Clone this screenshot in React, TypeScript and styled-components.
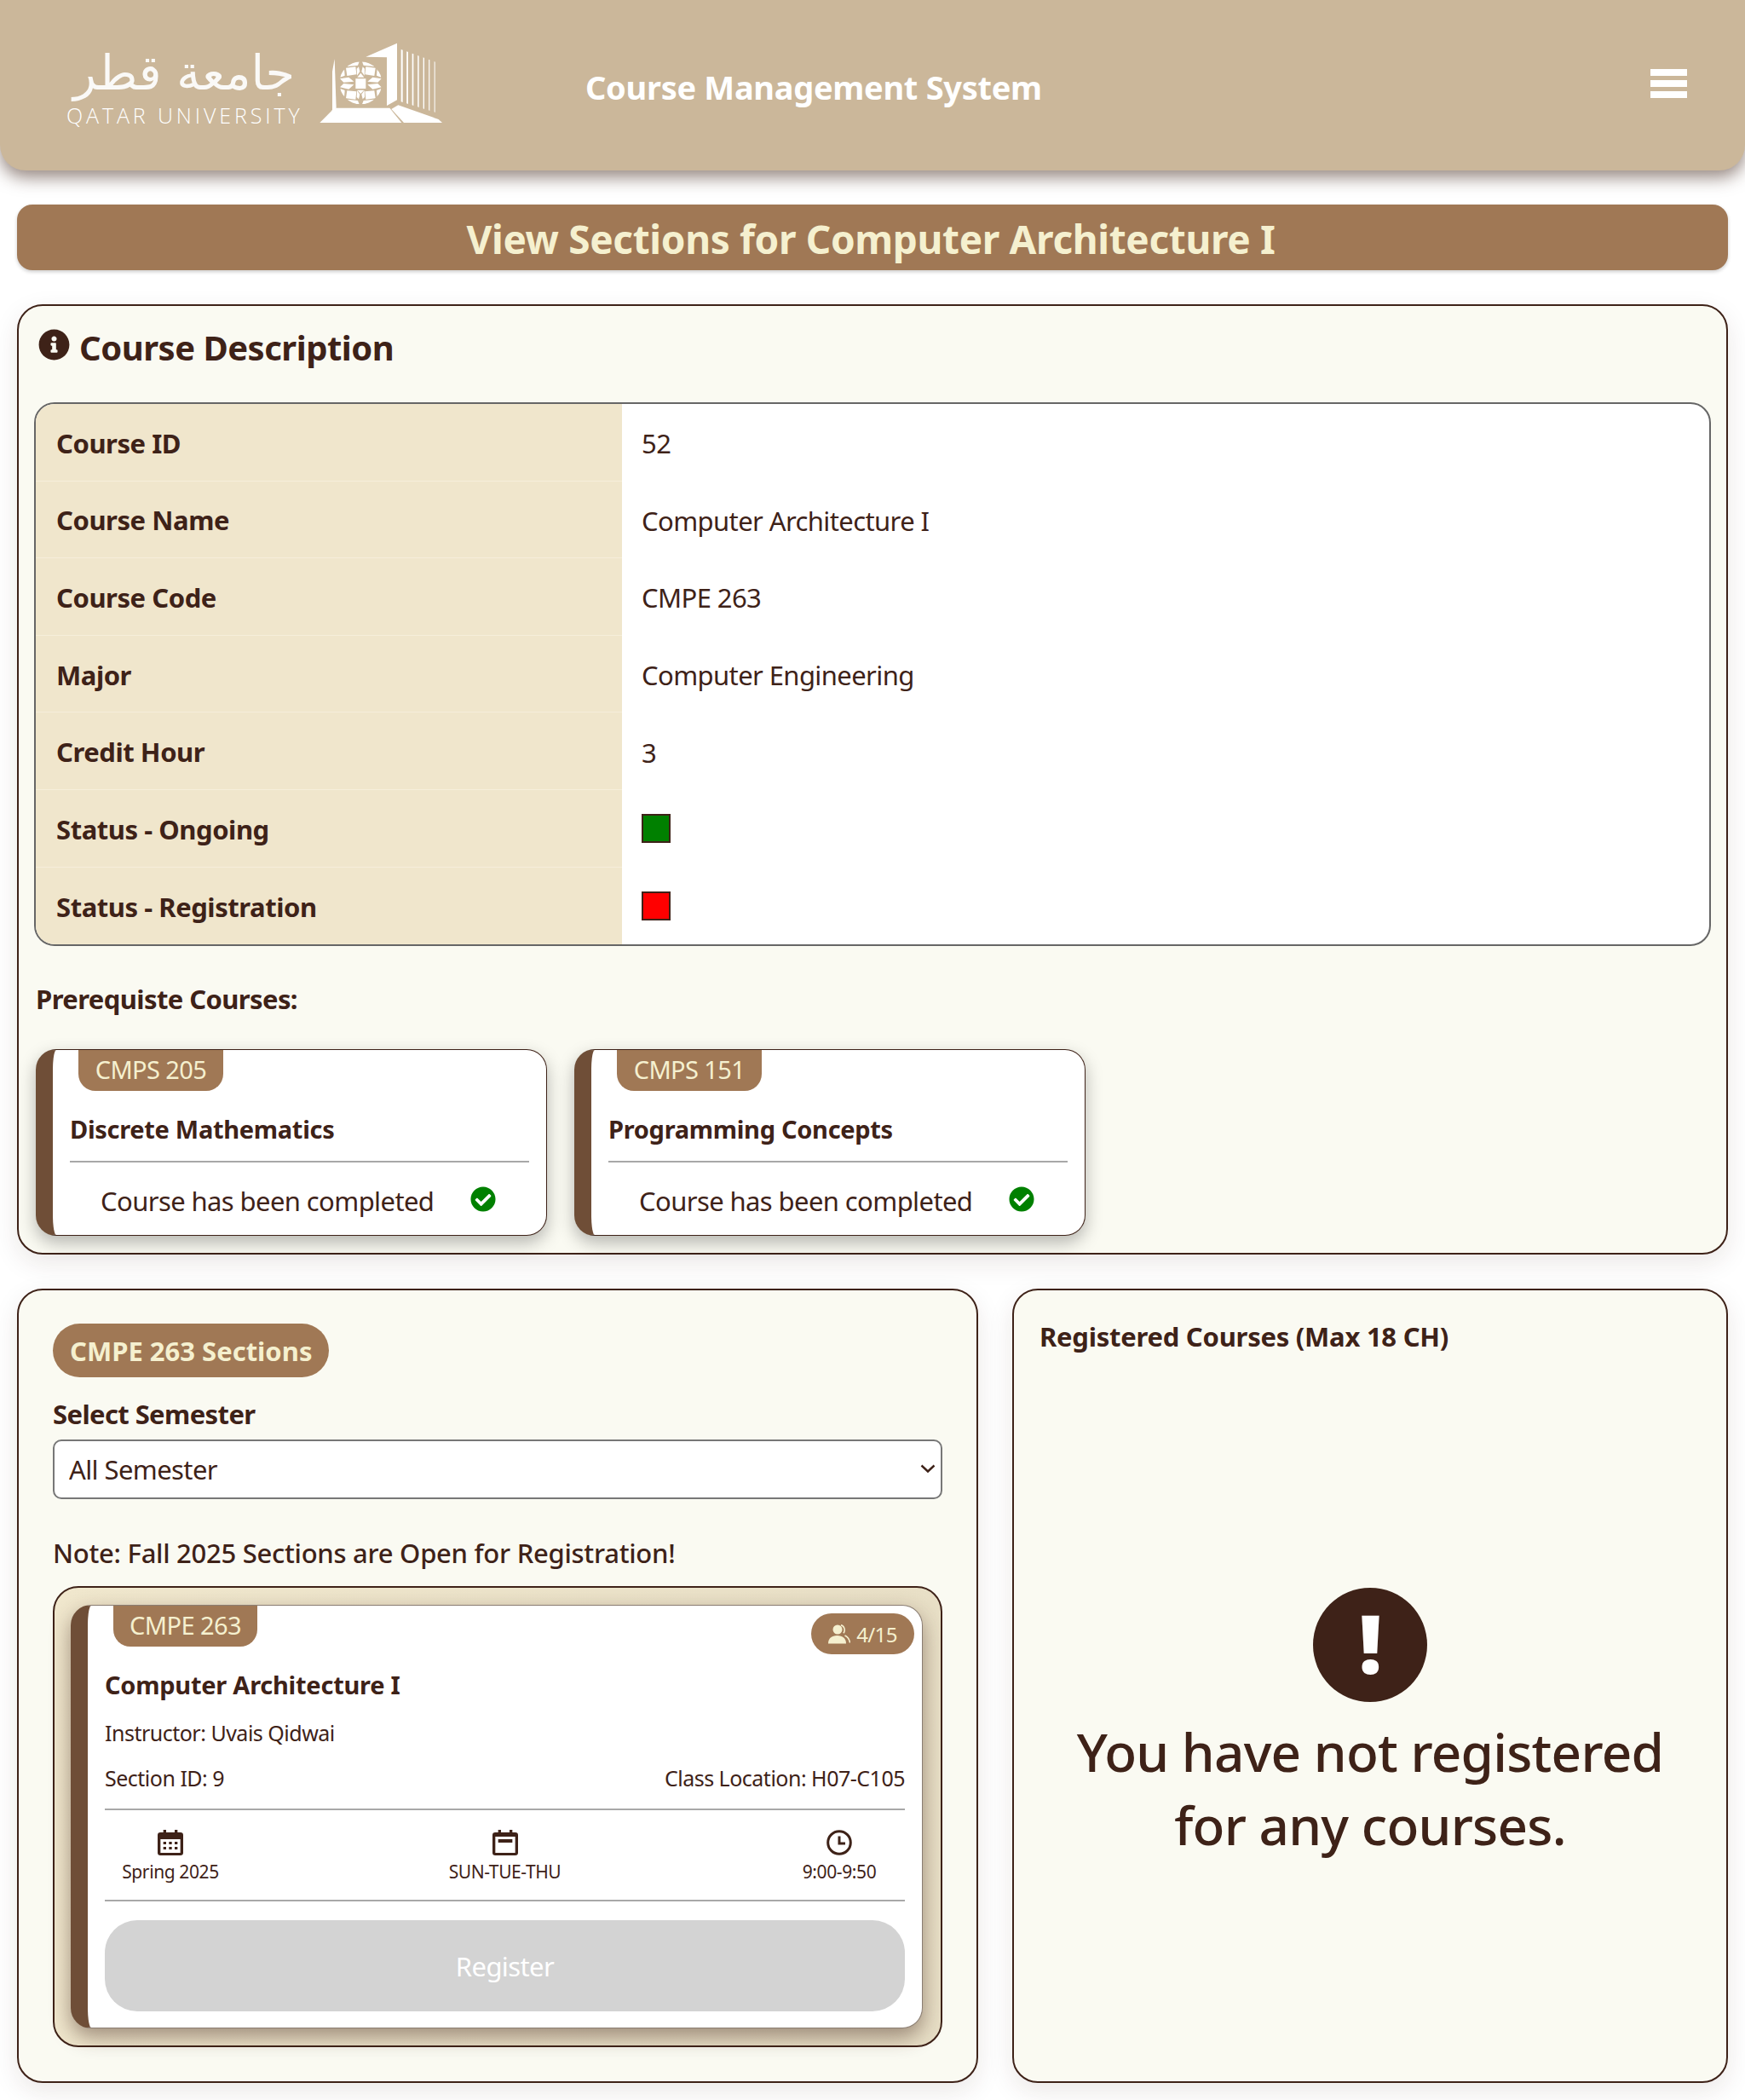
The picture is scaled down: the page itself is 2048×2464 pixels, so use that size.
import React from "react";
import styled, { createGlobalStyle } from "styled-components";
import { FaCheckCircle, FaInfoCircle } from "react-icons/fa";

const dark = "#3e2218";
const tan = "#a07855";
const cream = "#f5f0cf";
const font = `"Noto Sans", "Open Sans", sans-serif`;

const Global = createGlobalStyle`
  html, body { margin: 0; padding: 0; background: #fff; }
  body { font-family: ${font}; color: ${dark}; font-size: 31px; letter-spacing: -0.6px; }
  * { box-sizing: border-box; }
`;

const Page = styled.div`
  width: 2048px;
  height: 2464px;
  overflow: hidden;
`;
const Header = styled.header`
  height: 200px;
  background: #cbb79a;
  border-radius: 0 0 30px 30px;
  box-shadow: 0 8px 20px rgba(62, 34, 24, 0.55);
  display: flex;
  align-items: flex-start;
  padding-left: 78px;
  position: relative;
`;
const Wordmark = styled.div`
  width: 276px;
  height: 200px;
  padding-top: 53px;
  color: #fff;
  display: flex;
  flex-direction: column;
  align-items: stretch;
`;
const Arabic = styled.div`
  font-family: "DejaVu Sans", sans-serif;
  font-size: 56px;
  font-weight: 400;
  letter-spacing: 0;
  line-height: 65px;
  height: 65px;
  text-align: center;
  white-space: nowrap;
  direction: rtl;
  opacity: 0.92;
`;
const Latin = styled.div`
  font-family: "Open Sans", sans-serif;
  font-size: 25px;
  font-weight: 300;
  letter-spacing: 3.9px;
  line-height: 34px;
  white-space: nowrap;
`;
const Emblem = styled.svg`
  width: 156px;
  height: 108px;
  margin: 44px 0 0 16px;
  flex: none;
`;
const AppTitle = styled.h1`
  margin: 77px 0 0 161px;
  font-size: 38px;
  line-height: 50px;
  font-weight: 700;
  letter-spacing: -0.3px;
  color: #fff;
  white-space: nowrap;
`;
const MenuButton = styled.div`
  margin: 81px 0 0 auto;
  margin-right: 68px;
  width: 43px;
  display: flex;
  flex-direction: column;
  gap: 5px;
`;
const MenuBar = styled.span`
  display: block;
  height: 8px;
  background: #fff;
`;
const Main = styled.main`
  padding: 40px 20px 0;
  display: flex;
  flex-direction: column;
  gap: 40px;
`;
const Banner = styled.h2`
  margin: 0;
  height: 77px;
  background: ${tan};
  border-radius: 18px;
  color: ${cream};
  font-size: 46px;
  line-height: 80px;
  font-weight: 700;
  letter-spacing: -0.35px;
  text-align: center;
  padding-right: 4px;
  box-shadow: 0 2px 4px rgba(0, 0, 0, 0.2);
  overflow: hidden;
`;
const Panel = styled.section`
  background: #fafaf2;
  border: 2px solid ${dark};
  border-radius: 30px;
  box-shadow: 0 10px 30px rgba(62, 34, 24, 0.1);
`;
const DescPanel = styled(Panel)`
  height: 1115px;
  padding: 0 18px;
`;
const DescHeading = styled.h3`
  margin: 0;
  height: 113px;
  display: flex;
  align-items: center;
  gap: 11px;
  padding: 0 0 16px 5px;
  font-size: 40px;
  font-weight: 700;
  letter-spacing: -0.5px;
  svg { width: 37px; height: 37px; margin-top: -6px; }
`;
const InfoTable = styled.div`
  border: 2px solid #666;
  border-radius: 24px;
  overflow: hidden;
  background: #fff;
`;
const Row = styled.div`
  display: grid;
  grid-template-columns: 688px 1fr;
  height: 90.6px;
`;
const RowLabel = styled.div`
  background: #f0e6cc;
  font-weight: 700;
  letter-spacing: -0.45px;
  display: flex;
  align-items: center;
  padding: 2px 0 0 24px;
  border-bottom: 1px solid #f6eedb;
  ${Row}:last-child & { border-bottom: 0; }
`;
const RowValue = styled.div`
  display: flex;
  align-items: center;
  padding: 2px 0 0 23px;
`;
const Swatch = styled.span<{ $color: string }>`
  display: block;
  width: 34px;
  height: 34px;
  background: ${(p) => p.$color};
  border: 2px solid ${dark};
  margin-top: -2px;
`;
const PrereqTitle = styled.div`
  font-weight: 700;
  line-height: 40px;
  margin: 42px 0 39px 2px;
`;
const PrereqList = styled.div`
  display: flex;
  gap: 32px;
  padding-left: 2px;
`;
const CourseCard = styled.article`
  width: 600px;
  height: 219px;
  background: #fff;
  border: 1px solid ${dark};
  border-left: 20px solid #6f4e37;
  border-radius: 24px;
  box-shadow: 0 8px 20px rgba(0, 0, 0, 0.28);
  padding: 0 20px;
  display: flex;
  flex-direction: column;
`;
const Tab = styled.div<{ $w: number }>`
  width: ${(p) => p.$w}px;
  height: 48px;
  flex: none;
  margin-left: 10px;
  background: ${tan};
  color: ${cream};
  border-radius: 0 0 20px 20px;
  font-size: 29px;
  line-height: 46px;
  text-align: center;
`;
const CourseName = styled.div`
  font-weight: 700;
  font-size: 29px;
  letter-spacing: -0.3px;
  line-height: 40px;
  margin-top: 25px;
`;
const Rule = styled.hr`
  border: 0;
  height: 2px;
  background: #a8a8a8;
  margin: 17px 0 0;
  flex: none;
`;
const Done = styled.div`
  display: flex;
  align-items: center;
  justify-content: space-between;
  height: 40px;
  width: 464px;
  margin: 25px 0 0 36px;
  white-space: nowrap;
  svg { width: 30px; height: 30px; color: #008000; margin-top: -4px; flex: none; }
`;
const Lower = styled.div`
  display: grid;
  grid-template-columns: 1128px 840px;
  gap: 40px;
  height: 932px;
`;
const SectionsPanel = styled(Panel)`
  padding: 39px 40px 0;
`;
const Pill = styled.div`
  display: inline-block;
  height: 63px;
  padding: 1px 20px 0;
  background: ${tan};
  color: ${cream};
  border-radius: 32px;
  font-weight: 700;
  letter-spacing: 0;
  line-height: 63px;
`;
const FieldLabel = styled.label`
  display: block;
  font-weight: 700;
  line-height: 40px;
  margin-top: 23px;
`;
const SelectWrap = styled.div`
  position: relative;
  margin-top: 10px;
  svg { position: absolute; right: 8px; top: 28px; pointer-events: none; }
`;
const Select = styled.select`
  display: block;
  width: 100%;
  height: 70px;
  appearance: none;
  font: 400 31px ${font};
  letter-spacing: -0.6px;
  color: ${dark};
  background: #fff;
  border: 2px solid #777;
  border-radius: 10px;
  padding: 0 17px;
`;
const Note = styled.div`
  font-weight: 500;
  letter-spacing: -0.27px;
  line-height: 40px;
  margin-top: 43px;
`;
const SectionTray = styled.div`
  height: 541px;
  margin-top: 19px;
  border: 2px solid ${dark};
  border-radius: 30px;
  background: linear-gradient(90deg, #f0e7cd, #e8dfc6);
  padding: 20px 21px 20px 19px;
`;
const SectionCard = styled.article`
  height: 497px;
  background: #fff;
  border: 1px solid #8a7d72;
  border-left: 20px solid #6f4e37;
  border-radius: 24px;
  box-shadow: 0 10px 24px rgba(62, 34, 24, 0.45);
  padding: 0 20px;
  display: flex;
  flex-direction: column;
  position: relative;
`;
const Capacity = styled.div`
  position: absolute;
  top: 9px;
  right: 9px;
  width: 121px;
  height: 48px;
  border-radius: 24px;
  background: ${tan};
  color: ${cream};
  font-size: 24px;
  display: flex;
  align-items: center;
  justify-content: center;
  gap: 7px;
`;
const SectionName = styled.div`
  font-weight: 700;
  font-size: 29px;
  letter-spacing: -0.25px;
  line-height: 40px;
  margin-top: 25px;
`;
const SmallLine = styled.div`
  display: flex;
  justify-content: space-between;
  font-size: 25px;
  letter-spacing: -0.5px;
  line-height: 34px;
  margin-top: 19px;
`;
const SectionRule = styled(Rule)`
  margin: 19px 0 0;
`;
const Facts = styled.div`
  display: flex;
  justify-content: space-between;
  height: 105px;
  padding-top: 23px;
`;
const Fact = styled.div`
  width: 154px;
  display: flex;
  flex-direction: column;
  align-items: center;
  font-size: 21px;
  letter-spacing: -0.4px;
  line-height: 30px;
  white-space: nowrap;
  svg { width: 30px; height: 30px; display: block; margin-bottom: 4px; }
`;
const FactRule = styled(Rule)`
  margin: 0;
`;
const RegisterButton = styled.button`
  display: block;
  width: 100%;
  height: 107px;
  margin-top: 22px;
  border: 0;
  border-radius: 38px;
  background: #d3d3d3;
  color: #fff;
  font: 400 31px ${font};
  letter-spacing: -0.6px;
`;
const RegisteredPanel = styled(Panel)`
  padding: 34px 30px 0;
  display: flex;
  flex-direction: column;
  align-items: stretch;
`;
const RegisteredTitle = styled.div`
  font-weight: 700;
  letter-spacing: -0.25px;
  line-height: 40px;
`;
const Empty = styled.div`
  margin-top: 275px;
  display: flex;
  flex-direction: column;
  align-items: center;
`;
const Alert = styled.div`
  width: 134px;
  height: 134px;
  border-radius: 50%;
  background: ${dark};
  color: #fff;
  font-size: 96px;
  font-weight: 900;
  line-height: 128px;
  text-align: center;
`;
const EmptyText = styled.div`
  margin-top: 15px;
  font-size: 62px;
  letter-spacing: -0.75px;
  line-height: 86px;
  text-align: center;
  width: 720px;
  font-weight: 500;
`;

const Bars = [0, 1, 2, 3, 4, 5, 6];

const QuLogo = () => (
  <Emblem viewBox="0 0 468 324" aria-hidden="true">
    <defs>
      <clipPath id="globe">
        <circle cx="160" cy="160" r="75" />
      </clipPath>
    </defs>
    <g fill="#fff">
      <polygon points="68,75 60,120 60,262 74,248" />
      <polygon points="16,300 60,256 74,248 262,248 304,300" />
      <polygon points="178,68 288,20 288,220 252,240 252,70" />
      <polygon points="268,252 292,238 434,288 447,300 312,300" />
      {Bars.map((i) => (
        <polygon
          key={i}
          points={`${302 + i * 19.5},${42 + i * 7} ${308 + i * 19},${44 + i * 7} ${308 + i * 19},${228 + i * 6} ${302 + i * 19.5},${226 + i * 6}`}
        />
      ))}
      <g clipPath="url(#globe)">
        <polygon points="142,145 178,145 178,180 142,180" />
        <polygon points="160,125 148,140 172,140" />
        <polygon points="160,198 148,185 172,185" />
        {[0, 1].map((flip) => (
          <g key={flip} transform={flip ? "translate(320 0) scale(-1 1)" : undefined}>
            <polygon points="108,107 142,103 145,130 112,135" />
            <polygon points="112,187 145,190 142,218 108,214" />
            <polygon points="87,145 118,140 136,155 100,158" />
            <polygon points="87,175 100,162 136,166 118,182" />
            <polygon points="118,88 155,85 150,98 112,102" />
            <polygon points="153,103 157,120 147,134 146,110" />
            <polygon points="118,232 155,235 150,222 112,218" />
            <polygon points="153,217 157,200 147,186 146,210" />
            <polygon points="86,132 102,110 104,134 88,140" />
            <polygon points="86,188 102,210 104,186 88,180" />
          </g>
        ))}
      </g>
    </g>
  </Emblem>
);

const MonthIcon = () => (
  <svg viewBox="0 0 27 30" fill={dark} aria-hidden="true" preserveAspectRatio="none">
    <rect x="6" y="0" width="3" height="5" />
    <rect x="18" y="0" width="3" height="5" />
    <path d="M3 3h21a3 3 0 0 1 3 3v21a3 3 0 0 1-3 3H3a3 3 0 0 1-3-3V6a3 3 0 0 1 3-3zm0 8v16h21V11z" fillRule="evenodd" />
    {[6, 12, 18].map((x) =>
      [14, 20].map((y) => <rect key={`${x}-${y}`} x={x} y={y} width="3" height="3" />)
    )}
  </svg>
);
const DayIcon = () => (
  <svg viewBox="0 0 27 30" fill={dark} aria-hidden="true" preserveAspectRatio="none">
    <rect x="6" y="0" width="3" height="5" />
    <rect x="18" y="0" width="3" height="5" />
    <path d="M3 3h21a3 3 0 0 1 3 3v21a3 3 0 0 1-3 3H3a3 3 0 0 1-3-3V6a3 3 0 0 1 3-3zm0 5v19h21V8z" fillRule="evenodd" />
    <rect x="6" y="11" width="15" height="4" />
  </svg>
);
const ClockIcon = () => (
  <svg viewBox="0 0 30 30" fill="none" stroke={dark} aria-hidden="true">
    <circle cx="15" cy="15" r="13.3" strokeWidth="3" />
    <path d="M15 7.5V16h7" strokeWidth="3" />
  </svg>
);
const PeopleIcon = () => (
  <svg width="26" height="23" viewBox="0 0 26 23" aria-hidden="true">
    <circle cx="11" cy="6" r="5.5" fill={cream} />
    <path d="M0 22.5c0-6 4-9.5 10.5-9.5S21 16.500 21 22.500z" fill={cream} />
    <path d="M15 .8c4 1 5.500 6 3 9.500M19.500 13c3.500 1.500 5.500 5 6 8.500" fill="none" stroke={cream} strokeWidth="1.600" />
  </svg>
);
const Chevron = () => (
  <svg width="18" height="12" viewBox="0 0 18 12" fill="none" stroke={dark} strokeWidth="2.400" aria-hidden="true">
    <path d="M1.500 2.500l7.500 7 7.500-7" />
  </svg>
);

const details: [string, React.ReactNode][] = [
  ["Course ID", "52"],
  ["Course Name", "Computer Architecture I"],
  ["Course Code", "CMPE 263"],
  ["Major", "Computer Engineering"],
  ["Credit Hour", "3"],
  ["Status - Ongoing", <Swatch $color="#008000" />],
  ["Status - Registration", <Swatch $color="#ff0000" />],
];

const prereqs = [
  { code: "CMPS 205", name: "Discrete Mathematics" },
  { code: "CMPS 151", name: "Programming Concepts" },
];

export default function App() {
  return (
    <Page>
      <Global />
      <Header>
        <Wordmark>
          <Arabic>جامعة قطر</Arabic>
          <Latin>QATAR UNIVERSITY</Latin>
        </Wordmark>
        <QuLogo />
        <AppTitle>Course Management System</AppTitle>
        <MenuButton>
          <MenuBar />
          <MenuBar />
          <MenuBar />
        </MenuButton>
      </Header>
      <Main>
        <Banner>View Sections for Computer Architecture I</Banner>
        <DescPanel>
          <DescHeading>
            <FaInfoCircle />
            Course Description
          </DescHeading>
          <InfoTable>
            {details.map(([label, value]) => (
              <Row key={label}>
                <RowLabel>{label}</RowLabel>
                <RowValue>{value}</RowValue>
              </Row>
            ))}
          </InfoTable>
          <PrereqTitle>Prerequiste Courses:</PrereqTitle>
          <PrereqList>
            {prereqs.map((p) => (
              <CourseCard key={p.code}>
                <Tab $w={170}>{p.code}</Tab>
                <CourseName>{p.name}</CourseName>
                <Rule />
                <Done>
                  Course has been completed
                  <FaCheckCircle />
                </Done>
              </CourseCard>
            ))}
          </PrereqList>
        </DescPanel>
        <Lower>
          <SectionsPanel>
            <Pill>CMPE 263 Sections</Pill>
            <FieldLabel htmlFor="semester">Select Semester</FieldLabel>
            <SelectWrap>
              <Select id="semester" defaultValue="all">
                <option value="all">All Semester</option>
              </Select>
              <Chevron />
            </SelectWrap>
            <Note>Note: Fall 2025 Sections are Open for Registration!</Note>
            <SectionTray>
              <SectionCard>
                <Tab $w={169}>CMPE 263</Tab>
                <Capacity>
                  <PeopleIcon />
                  4/15
                </Capacity>
                <SectionName>Computer Architecture I</SectionName>
                <SmallLine>Instructor: Uvais Qidwai</SmallLine>
                <SmallLine>
                  <span>Section ID: 9</span>
                  <span>Class Location: H07-C105</span>
                </SmallLine>
                <SectionRule />
                <Facts>
                  <Fact>
                    <MonthIcon />
                    Spring 2025
                  </Fact>
                  <Fact>
                    <DayIcon />
                    SUN-TUE-THU
                  </Fact>
                  <Fact>
                    <ClockIcon />
                    9:00-9:50
                  </Fact>
                </Facts>
                <FactRule />
                <RegisterButton disabled>Register</RegisterButton>
              </SectionCard>
            </SectionTray>
          </SectionsPanel>
          <RegisteredPanel>
            <RegisteredTitle>Registered Courses (Max 18 CH)</RegisteredTitle>
            <Empty>
              <Alert>!</Alert>
              <EmptyText>You have not registered for any courses.</EmptyText>
            </Empty>
          </RegisteredPanel>
        </Lower>
      </Main>
    </Page>
  );
}
